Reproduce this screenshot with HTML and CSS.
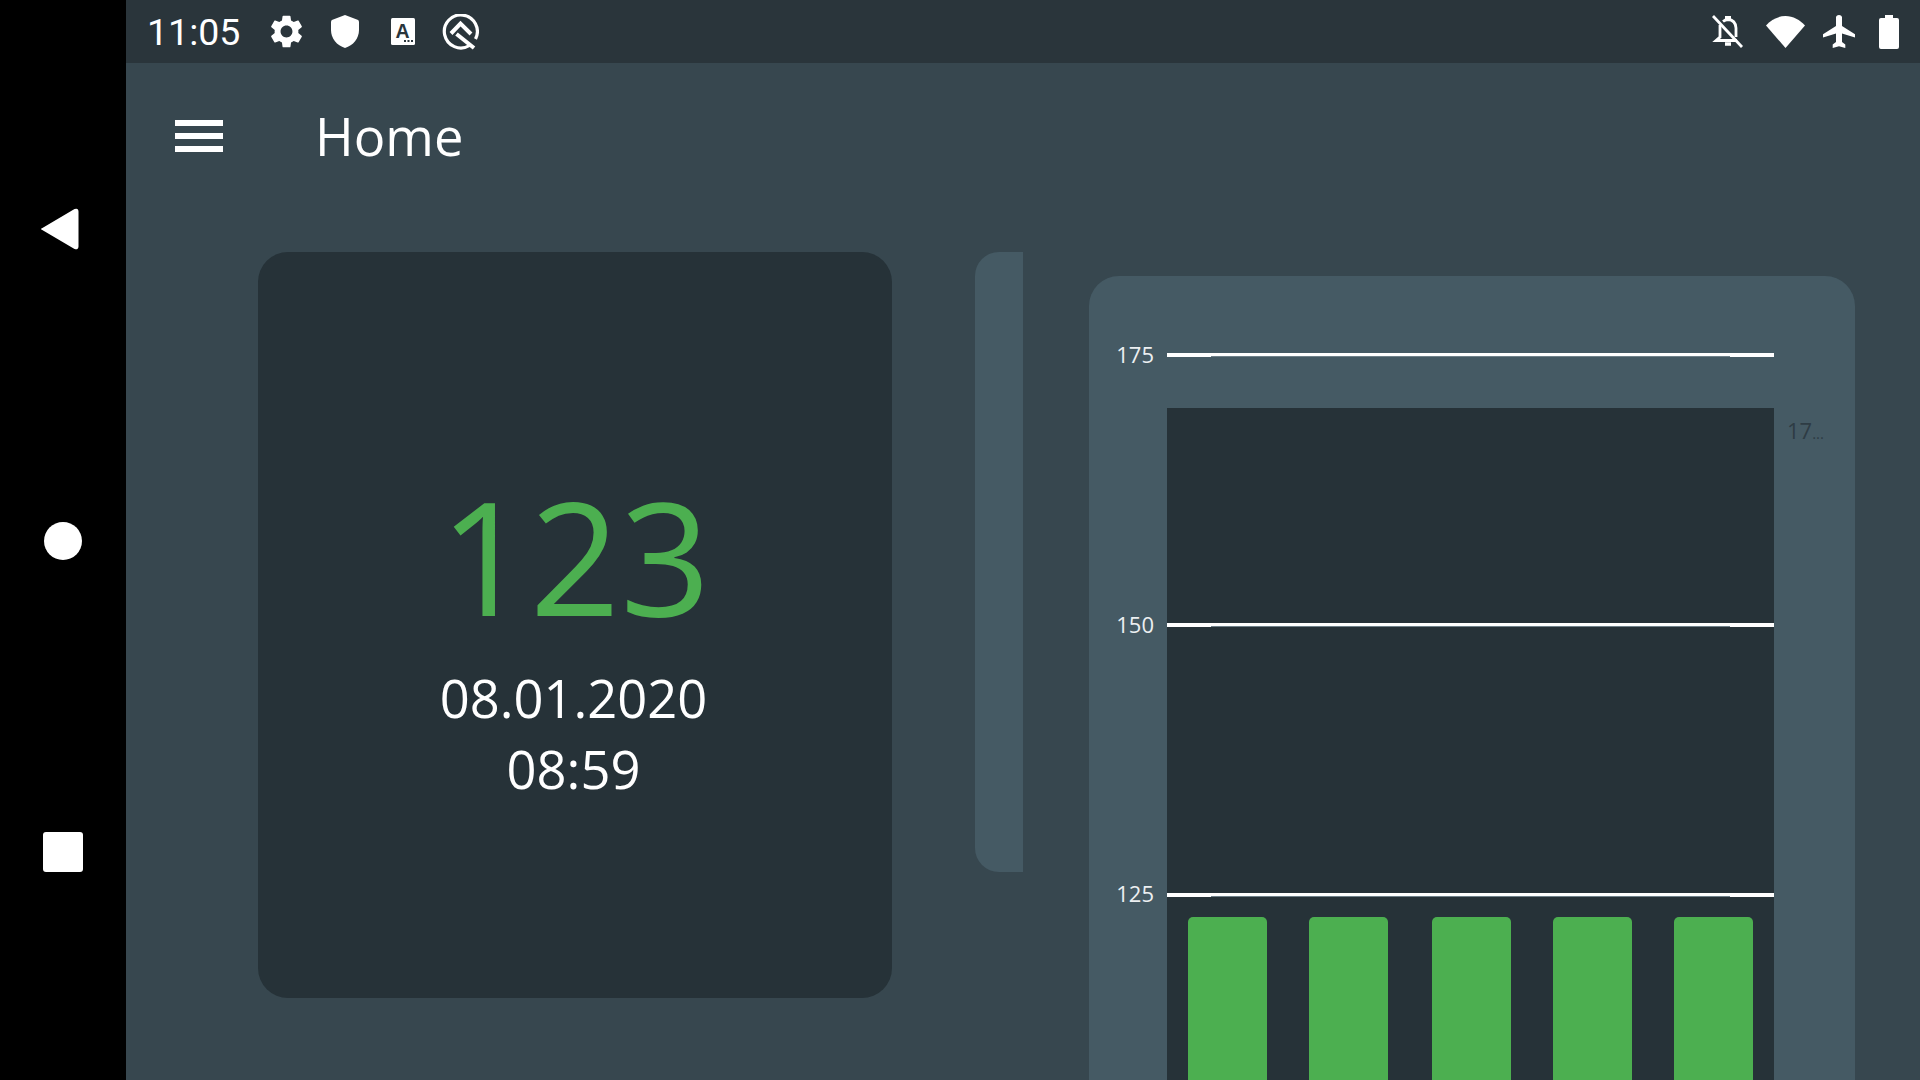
FILE: index.html
```html
<!DOCTYPE html>
<html lang="en">

<head>
    <meta charset="UTF-8">
    <title>Home</title>
    <link rel="stylesheet" href="styles.css">
</head>

<body>
    <nav class="nav-bar">
        <svg class="nav-back" viewBox="0 0 38 42"><path d="M1.500 21 34 2q2.500-1.200 2.500 1.500v35q0 2.700-2.500 1.500z" fill="#fff" stroke="#fff" stroke-width="2"/></svg>
        <div class="nav-home"></div>
        <div class="nav-recent"></div>
    </nav>

    <div class="screen">
        <header class="status-bar">
            <span class="clock">11:05</span>
            <svg class="icon icon-gear" viewBox="2.300 2 19.400 20"><path d="M19.140 12.940c.04-.3.06-.61.06-.94 0-.32-.02-.64-.07-.94l2.030-1.580c.18-.14.23-.41.12-.61l-1.920-3.320c-.12-.22-.37-.29-.59-.22l-2.390.96c-.5-.38-1.030-.7-1.620-.94l-.36-2.540c-.04-.24-.24-.41-.48-.41h-3.840c-.24 0-.43.17-.47.41l-.36 2.540c-.59.24-1.130.57-1.620.94l-2.390-.96c-.22-.08-.47 0-.59.22L2.740 8.870c-.12.21-.08.47.12.61l2.030 1.580c-.05.3-.09.63-.09.94s.02.64.07.94l-2.030 1.580c-.18.14-.23.41-.12.61l1.920 3.320c.12.22.37.29.59.22l2.390-.96c.5.38 1.030.7 1.620.94l.36 2.540c.05.24.24.41.48.41h3.840c.24 0 .44-.17.47-.41l.36-2.540c.59-.24 1.130-.56 1.620-.94l2.390.96c.22.08.47 0 .59-.22l1.920-3.320c.12-.22.07-.47-.12-.61l-2.010-1.580zM12 15.600c-1.980 0-3.600-1.620-3.600-3.600s1.620-3.600 3.600-3.600 3.600 1.620 3.600 3.600-1.620 3.600-3.600 3.600z"/></svg>
            <svg class="icon icon-shield" viewBox="0 0 28 33"><path d="M14 0 1.500 4.800Q0 5.400 0 7v8c0 8.500 5.800 15.500 14 18 8.200-2.500 14-9.500 14-18V7q0-1.600-1.500-2.200z"/></svg>
            <svg class="icon icon-keyboard" viewBox="0 0 24 27">
                <rect width="24" height="27" rx="1.500"/>
                <text class="icon-letter" x="11.500" y="20" text-anchor="middle">A</text>
                <rect class="icon-dot" x="13" y="22" width="2" height="2"/>
                <rect class="icon-dot" x="16.500" y="22" width="2" height="2"/>
                <rect class="icon-dot" x="20" y="22" width="2" height="2"/>
            </svg>
            <svg class="icon icon-q" viewBox="0 0 37 36" fill="none" stroke="#fff">
                <path d="M27.500 31.500A16.500 16.500 0 1 1 33.500 25" stroke-width="3.200"/>
                <path d="M9 19.500 18.500 9.500 29 20" stroke-width="4"/>
                <path d="M14.500 20 32 34" stroke-width="4"/>
            </svg>
            <div class="status-right">
                <svg class="icon icon-bell" viewBox="0 0 32 33" fill="none" stroke="#fff" stroke-width="2.800">
                    <path d="M1 1 30 32"/>
                    <path d="M8 10v12l-4 3.500h21"/>
                    <path d="M11 6.500q2.500-2 5-2 7.500.5 8 8.500v9"/>
                    <path d="M13 2.500h6" stroke-width="3"/>
                    <path d="M13 29h6" stroke-width="3.500"/>
                </svg>
                <svg class="icon icon-wifi" viewBox="0 0 39 32"><path d="M19.500 32 0 9.500C5 4 12 0 19.500 0S34 4 39 9.500z"/></svg>
                <svg class="icon icon-plane" viewBox="0 0 32 33"><path d="M32 22.500v-3.300L19 11V2.500C19 1 17.800 0 16 0s-3 1-3 2.500V11L0 19.200v3.300l13-4.100V27l-3.300 2.500V33l6.300-1.800 6.300 1.800v-3.500L19 27v-8.600z"/></svg>
                <svg class="icon icon-battery" viewBox="0 0 20 34"><path d="M6 0h8v3h4q2 0 2 2v27q0 2-2 2H2q-2 0-2-2V5q0-2 2-2h4z"/></svg>
            </div>
        </header>

        <div class="toolbar">
            <div class="menu-btn">
                <span></span>
                <span></span>
                <span></span>
            </div>
            <h1 class="title">Home</h1>
        </div>

        <main class="content">
            <section class="value-card">
                <div class="value">123</div>
                <div class="stamp">08.01.2020</div>
                <div class="stamp">08:59</div>
            </section>

            <div class="scroll-thumb"></div>

            <section class="chart-card">
                <div class="chart-main">
                    <div class="tick tick-top">
                        <span class="tick-label">175</span>
                        <div class="tick-line"></div>
                    </div>
                    <div class="plot">
                        <div class="tick tick-150">
                            <span class="tick-label">150</span>
                            <div class="tick-line"></div>
                        </div>
                        <div class="tick tick-125">
                            <span class="tick-label">125</span>
                            <div class="tick-line"></div>
                        </div>
                        <div class="bars">
                            <div class="bar"></div>
                            <div class="bar"></div>
                            <div class="bar"></div>
                            <div class="bar"></div>
                            <div class="bar"></div>
                        </div>
                    </div>
                </div>
                <span class="side-label">17<span class="side-dots">...</span></span>
            </section>
        </main>
    </div>
</body>

</html>
```

FILE: styles.css
```css
html, body {
    height: 100%;
}

body {
    margin: 0;
    display: flex;
    height: 1080px;
    overflow: hidden;
    background-color: #37474f;
    color: #fff;
    font-family: "Open Sans", sans-serif;
}

/* android nav bar */
.nav-bar {
    width: 126px;
    flex-shrink: 0;
    box-sizing: border-box;
    padding: 208px 0;
    background-color: #000;
    display: flex;
    flex-direction: column;
    align-items: center;
    justify-content: space-between;
}

.nav-back {
    width: 38px;
    height: 42px;
    margin-right: 6px;
}

.nav-home {
    width: 38px;
    height: 38px;
    border-radius: 50%;
    background-color: #fff;
}

.nav-recent {
    width: 40px;
    height: 40px;
    border-radius: 3px;
    background-color: #fff;
}

.screen {
    flex: 1;
    min-width: 0;
    display: flex;
    flex-direction: column;
}

/* status bar */
.status-bar {
    height: 63px;
    flex-shrink: 0;
    box-sizing: border-box;
    padding: 0 21px 0 21px;
    background-color: #2a353b;
    display: flex;
    align-items: center;
}

.clock {
    font-family: Roboto, sans-serif;
    font-size: 37.500px;
    margin-right: 30px;
}

.icon {
    display: block;
    fill: #fff;
    flex-shrink: 0;
}

.icon-gear {
    width: 33px;
    height: 33px;
    margin-right: 28px;
}

.icon-shield {
    width: 28px;
    height: 33px;
    margin-right: 32px;
}

.icon-keyboard {
    width: 24px;
    height: 27px;
    margin-right: 27px;
}

.icon-letter {
    font-family: "Liberation Sans", sans-serif;
    font-size: 19.500px;
    font-weight: bold;
    fill: #2a353b;
}

.icon-dot {
    fill: #2a353b;
}

.icon-q {
    width: 37px;
    height: 36px;
    fill: none;
}

.status-right {
    margin-left: auto;
    display: flex;
    align-items: center;
}

.icon-bell {
    width: 32px;
    height: 33px;
    fill: none;
    margin-right: 22px;
}

.icon-wifi {
    width: 39px;
    height: 32px;
    margin-right: 18px;
}

.icon-plane {
    width: 32px;
    height: 33px;
    margin-right: 24px;
}

.icon-battery {
    width: 20px;
    height: 34px;
}

/* toolbar */
.toolbar {
    height: 147px;
    flex-shrink: 0;
    box-sizing: border-box;
    display: flex;
    align-items: center;
    padding: 0 0 2px 49px;
}

.menu-btn {
    width: 48px;
    display: flex;
    flex-direction: column;
    gap: 7px;
    margin-right: 94px;
}

.menu-btn span {
    height: 6px;
    background-color: #fff;
}

.title {
    margin: 0 0 0 -2px;
    font-size: 52.500px;
    font-weight: 400;
}

/* main area */
.content {
    flex: 1;
    min-height: 0;
    display: flex;
    align-items: flex-start;
    padding: 42px 0 0 132px;
}

.value-card {
    width: 634px;
    height: 746px;
    flex-shrink: 0;
    box-sizing: border-box;
    border-radius: 30px;
    background-color: #263238;
    display: flex;
    flex-direction: column;
    align-items: center;
    justify-content: center;
}

.value {
    color: #4caf50;
    font-size: 158px;
    line-height: 215px;
}

.stamp {
    font-size: 52.500px;
    line-height: 71px;
    margin-right: 3px;
}

.scroll-thumb {
    width: 48px;
    height: 620px;
    flex-shrink: 0;
    margin-left: 83px;
    border-radius: 24px 0 0 24px;
    background-color: #455a64;
}

.chart-card {
    width: 766px;
    height: 900px;
    flex-shrink: 0;
    box-sizing: border-box;
    margin: 24px 0 0 66px;
    padding: 77px 0 0 78px;
    border-radius: 30px;
    background-color: #455a64;
    display: flex;
}

.chart-main {
    width: 607px;
    flex-shrink: 0;
}

.tick {
    height: 4px;
    display: flex;
    align-items: center;
    margin-left: -78px;
}

.tick-top {
    margin-bottom: 51px;
}

.tick-125 {
    margin-top: 266px;
}

.tick-label {
    width: 78px;
    flex-shrink: 0;
    box-sizing: border-box;
    padding-right: 13px;
    margin-bottom: 2px;
    text-align: right;
    font-size: 22px;
    line-height: 4px;
    color: #eceff1;
}

.tick-125 .tick-label {
    margin-bottom: 5px;
}

/* the ends of each line are a bit heavier than the middle */
.tick-line {
    flex: 1;
    height: 4px;
    background: linear-gradient(#6f818a, #6f818a) center bottom / calc(100% - 88px) 1px no-repeat, #fff;
}

.plot {
    height: 700px;
    padding-top: 215px;
    box-sizing: border-box;
    background-color: #263238;
}

.bars {
    margin-top: 20px;
    padding: 0 21px;
    display: flex;
    gap: 42px;
}

.bar {
    width: 79px;
    height: 400px;
    border-radius: 5px 5px 0 0;
    background-color: #4caf50;
}

.bar:nth-child(3) {
    margin-left: 2px;
}

.side-label {
    margin: 66px 0 0 13px;
    font-size: 22px;
    line-height: 22px;
    color: #2e3c44;
}

.side-dots {
    font-size: 15px;
}
```
